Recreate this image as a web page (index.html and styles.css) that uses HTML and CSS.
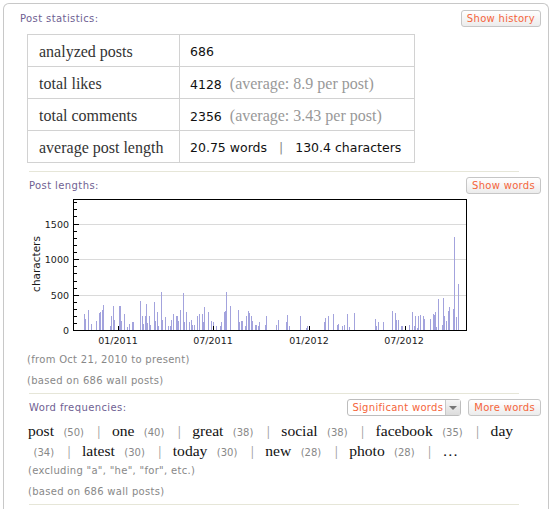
FILE: index.html
```html
<!DOCTYPE html>
<html lang="en">
<head>
    <meta charset="UTF-8">
    <meta name="viewport" content="width=device-width, initial-scale=1.0">
    <title>Post statistics</title>
    <link rel="stylesheet" href="styles.css">
</head>
<body>
    <div class="panel">
        <div class="section-head">
            <span class="label">Post statistics:</span>
            <button class="btn">Show history</button>
        </div>
        <table class="stats">
            <tr>
                <td class="key">analyzed posts</td>
                <td class="val">686</td>
            </tr>
            <tr>
                <td class="key">total likes</td>
                <td class="val">4128 <span class="avg">(average: 8.9 per post)</span></td>
            </tr>
            <tr>
                <td class="key">total comments</td>
                <td class="val">2356 <span class="avg">(average: 3.43 per post)</span></td>
            </tr>
            <tr>
                <td class="key">average post length</td>
                <td class="val">20.75 words <span class="bar">|</span> 130.4 characters</td>
            </tr>
        </table>

        <div class="divider"></div>
        <div class="section-head indent">
            <span class="label">Post lengths:</span>
            <button class="btn">Show words</button>
        </div>
        <svg class="chart" width="450" height="150" viewBox="20 196 450 150">
            <g stroke="#dadada" stroke-width="1">
                <path d="M74 224.5H466M74 259.5H466M74 295.5H466"/>
            </g>
            <path class="bars" d="M84.5 330v-16M85.5 330v-11M88.5 330v-20M91.5 330v-6M96.5 330v-9M99.5 330v-17M100.5 330v-18M102.5 330v-20M103.5 330v-25M110.5 330v-4M111.5 330v-14M113.5 330v-24M114.5 330v-10M119.5 330v-24M120.5 330v-24M121.5 330v-9M124.5 330v-16M127.5 330v-3M129.5 330v-6M132.5 330v-8M133.5 330v-8M140.5 330v-29M142.5 330v-14M143.5 330v-6M145.5 330v-14M146.5 330v-26M147.5 330v-7M149.5 330v-14M150.5 330v-5M154.5 330v-28M155.5 330v-9M157.5 330v-18M158.5 330v-4M161.5 330v-38M162.5 330v-10M165.5 330v-13M168.5 330v-4M170.5 330v-4M171.5 330v-10M173.5 330v-16M176.5 330v-14M177.5 330v-14M178.5 330v-9M180.5 330v-20M183.5 330v-37M184.5 330v-8M186.5 330v-18M189.5 330v-8M191.5 330v-10M192.5 330v-5M194.5 330v-5M197.5 330v-14M199.5 330v-16M202.5 330v-16M203.5 330v-8M204.5 330v-23M208.5 330v-18M211.5 330v-9M213.5 330v-8M216.5 330v-4M220.5 330v-4M221.5 330v-8M224.5 330v-18M225.5 330v-19M226.5 330v-38M230.5 330v-24M238.5 330v-20M239.5 330v-8M241.5 330v-9M242.5 330v-9M245.5 330v-4M246.5 330v-14M248.5 330v-19M249.5 330v-17M251.5 330v-14M252.5 330v-9M255.5 330v-5M256.5 330v-5M258.5 330v-4M259.5 330v-8M265.5 330v-5M266.5 330v-14M276.5 330v-5M278.5 330v-10M286.5 330v-8M287.5 330v-15M289.5 330v-4M300.5 330v-14M306.5 330v-2M307.5 330v-4M324.5 330v-8M325.5 330v-12M328.5 330v-14M333.5 330v-16M337.5 330v-5M338.5 330v-6M342.5 330v-4M344.5 330v-5M347.5 330v-16M349.5 330v-3M354.5 330v-17M375.5 330v-11M376.5 330v-4M378.5 330v-8M383.5 330v-8M392.5 330v-19M395.5 330v-17M396.5 330v-10M398.5 330v-10M401.5 330v-4M402.5 330v-4M409.5 330v-5M412.5 330v-18M414.5 330v-4M415.5 330v-14M417.5 330v-2M418.5 330v-14M420.5 330v-15M423.5 330v-14M424.5 330v-11M430.5 330v-11M433.5 330v-16M434.5 330v-15M435.5 330v-18M436.5 330v-3M438.5 330v-31M442.5 330v-5M443.5 330v-32M444.5 330v-14M446.5 330v-9M448.5 330v-19M449.5 330v-23M453.5 330v-21M454.5 330v-93M456.5 330v-13M458.5 330v-46"/>
            <rect x="73.5" y="199.5" width="393" height="131" fill="none" stroke="#000"/>
            <path stroke="#000" d="M74 323.5h3M74 316.5h3M74 309.5h3M74 302.5h3M74 295.5h5M74 288.5h3M74 281.5h3M74 273.5h3M74 266.5h3M74 259.5h5M74 252.5h3M74 245.5h3M74 238.5h3M74 231.5h3M74 224.5h5M74 216.5h3M74 209.5h3M74 202.5h3M118.5 330v-4M213.5 330v-4M309.5 330v-4M405.5 330v-4"/>
            <g class="axis-text" text-anchor="end">
                <text x="69" y="227.5">1500</text>
                <text x="69" y="263">1000</text>
                <text x="69" y="298.5">500</text>
                <text x="69" y="334">0</text>
            </g>
            <g class="axis-text" text-anchor="middle">
                <text x="118" y="344">01/2011</text>
                <text x="213" y="344">07/2011</text>
                <text x="309" y="344">01/2012</text>
                <text x="404" y="344">07/2012</text>
            </g>
            <text class="axis-title" x="-264" y="39.5" text-anchor="middle" transform="rotate(-90)">characters</text>
        </svg>
        <p class="note">(from Oct 21, 2010 to present)</p>
        <p class="note">(based on 686 wall posts)</p>

        <div class="divider"></div>
        <div class="section-head indent">
            <span class="label">Word frequencies:</span>
            <div class="controls">
                <span class="select">Significant words<span class="arrow"></span></span>
                <button class="btn">More words</button>
            </div>
        </div>
        <p class="words">
            <span class="w">post</span> <span class="n">(50)</span> <span class="sep">|</span>
            <span class="w">one</span> <span class="n">(40)</span> <span class="sep">|</span>
            <span class="w">great</span> <span class="n">(38)</span> <span class="sep">|</span>
            <span class="w">social</span> <span class="n">(38)</span> <span class="sep">|</span>
            <span class="w">facebook</span> <span class="n">(35)</span> <span class="sep">|</span>
            <span class="w">day</span> <span class="n">(34)</span> <span class="sep">|</span>
            <span class="w">latest</span> <span class="n">(30)</span> <span class="sep">|</span>
            <span class="w">today</span> <span class="n">(30)</span> <span class="sep">|</span>
            <span class="w">new</span> <span class="n">(28)</span> <span class="sep">|</span>
            <span class="w">photo</span> <span class="n">(28)</span> <span class="sep">|</span>
            <span class="w">…</span>
        </p>
        <p class="note wide">(excluding "a", "he", "for", etc.)</p>
        <p class="note wide">(based on 686 wall posts)</p>
        <div class="divider"></div>
    </div>
</body>
</html>
```

FILE: styles.css
```css
body {
    margin: 0;
    background-color: #fff;
    font-family: "DejaVu Sans", Verdana, sans-serif;
}

.panel {
    box-sizing: border-box;
    width: 546px;
    height: 520px;
    margin: 3px 0 0 3px;
    padding: 6px 7px 0 16px;
    border: 1px solid #c8c8c8;
    border-bottom: none;
    border-radius: 6px 6px 0 0;
}

.section-head {
    display: flex;
    justify-content: space-between;
    align-items: center;
    height: 17px;
}
.section-head.indent {
    margin-top: 5px;
    padding-left: 9px;
}

.label {
    font-size: 10px;
    letter-spacing: 0.4px;
    color: #6f5f93;
}

.btn {
    height: 17px;
    margin: 0;
    padding: 0 5px;
    border: 1px solid #c6c6c6;
    border-radius: 3px;
    background: linear-gradient(#ffffff, #ececec);
    font-family: "DejaVu Sans", Verdana, sans-serif;
    font-size: 10px;
    letter-spacing: 0.3px;
    line-height: 15px;
    color: #f5653b;
}

.controls {
    display: flex;
    gap: 7px;
}

.select {
    display: flex;
    align-items: center;
    height: 15px;
    padding-left: 4px;
    border: 1px solid #bdbdbd;
    border-radius: 3px;
    background-color: #fff;
    font-size: 10px;
    letter-spacing: 0.3px;
    line-height: 15px;
    color: #f5653b;
}
.select .arrow {
    position: relative;
    width: 14px;
    height: 15px;
    margin-left: 2px;
    border-left: 1px solid #c8c8c8;
    background: linear-gradient(#f6f6f6, #dcdcdc);
}
.select .arrow::after {
    content: "";
    position: absolute;
    left: 3px;
    top: 6px;
    border-left: 4px solid transparent;
    border-right: 4px solid transparent;
    border-top: 4px solid #777;
}

.stats {
    width: 388px;
    margin: 7px 0 0 7px;
    border-collapse: collapse;
}
.stats td {
    height: 32px;
    box-sizing: border-box;
    padding: 3px 10px 0 10px;
    border: 1px solid #d2d2d2;
    line-height: 16px;
    white-space: nowrap;
    vertical-align: middle;
}
.stats td.key {
    width: 152px;
    padding-left: 11px;
    font-family: "Liberation Serif", "Times New Roman", serif;
    font-size: 16px;
    color: #333;
}
.stats td.val {
    font-size: 12.5px;
    color: #111;
}
.avg {
    margin-left: 4px;
    font-family: "Liberation Serif", "Times New Roman", serif;
    font-size: 16px;
    line-height: 1;
    color: #999;
}
.bar {
    margin: 0 8px;
    color: #888;
}

.divider {
    width: 490px;
    height: 1px;
    margin-left: 9px;
    background-color: #e6e6d8;
}
.stats + .divider {
    margin-top: 8px;
}

.chart {
    display: block;
    margin-top: 2px;
}
.bars {
    stroke: #a3a3dd;
    stroke-width: 1;
    fill: none;
}
.axis-text {
    font-family: "DejaVu Sans", sans-serif;
    font-size: 9.5px;
    fill: #1a1a1a;
}
.axis-title {
    font-family: "DejaVu Sans", sans-serif;
    font-size: 10.5px;
    fill: #1a1a1a;
}

.note {
    margin: 0;
    padding-left: 7px;
    font-size: 10px;
    letter-spacing: 0.3px;
    line-height: 21px;
    color: #888;
}
.chart + .note {
    margin-top: 3px;
}
.note.wide {
    padding-left: 8px;
    line-height: 20.5px;
}
.words + .note {
    margin-top: -1px;
}
.note + .divider {
    margin-top: 2px;
}

.words {
    margin: 6px 0 0 0;
    padding-left: 8px;
    font-family: "Liberation Serif", "Times New Roman", serif;
    font-size: 15.6px;
    line-height: 18px;
    color: #111;
}
.words .n {
    margin-left: 5.5px;
    font-family: "DejaVu Sans", Verdana, sans-serif;
    font-size: 10px;
    color: #888;
}
.words .sep {
    margin: 0 7.5px 0 9.5px;
    color: #999;
}
```
